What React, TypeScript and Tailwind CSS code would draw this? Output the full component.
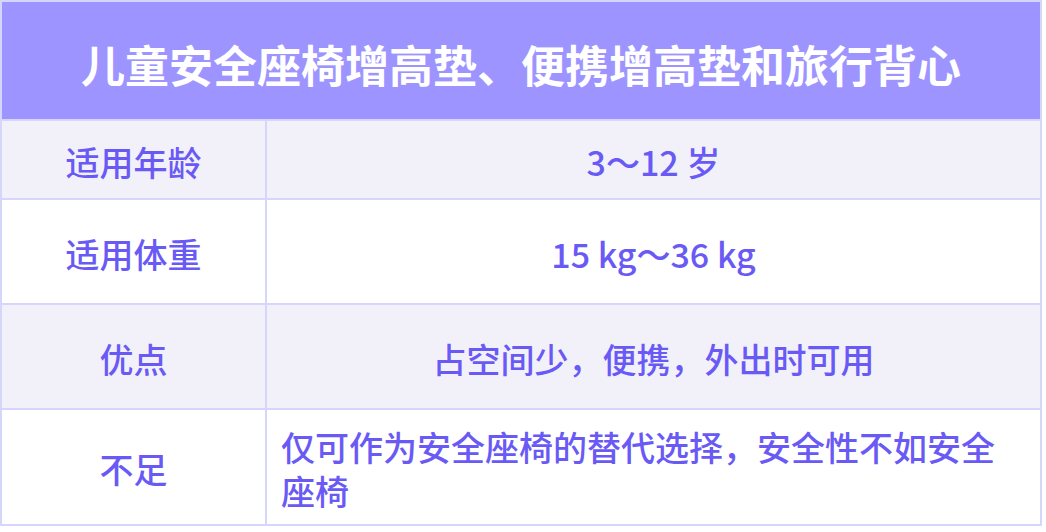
import React from "react";

const rows = [
  { label: "适用年龄", value: "3～12 岁", h: "h-[79px]", bg: "bg-[#f2f1fa]" },
  { label: "适用体重", value: "15 kg～36 kg", h: "h-[105px]", bg: "bg-white" },
  { label: "优点", value: "占空间少，便携，外出时可用", h: "h-[105px]", bg: "bg-[#f2f1fa]" },
  {
    label: "不足",
    value: "仅可作为安全座椅的替代选择，安全性不如安全座椅",
    h: "h-[116px]",
    bg: "bg-white",
  },
];

export default function App() {
  return (
    <div
      className="w-[1046px] h-[532px] bg-white"
      style={{ fontFamily: '"Noto Sans CJK SC", "Noto Sans", sans-serif' }}
    >
      <div className="w-[1042px] border-2 border-[#d6d6fc]">
        <div className="h-[117px] bg-[#9d94ff] flex items-center justify-center text-white text-[44px] font-bold leading-none pt-[6px]">
          儿童安全座椅增高垫、便携增高垫和旅行背心
        </div>
        {rows.map((r) => (
          <div key={r.label} className={`flex border-t-2 border-[#d6d6fc] ${r.h} ${r.bg}`}>
            <div className="w-[265px] shrink-0 border-r-2 border-[#d6d6fc] flex items-center justify-center text-[34px] font-medium text-[#6a5af5] leading-[44px] pt-[4px]">
              {r.label}
            </div>
            <div className="flex-1 flex items-center justify-center px-[14px] text-[34px] font-medium text-[#6a5af5] leading-[44px] pt-[4px]">
              <div className="text-left">{r.value}</div>
            </div>
          </div>
        ))}
      </div>
    </div>
  );
}
